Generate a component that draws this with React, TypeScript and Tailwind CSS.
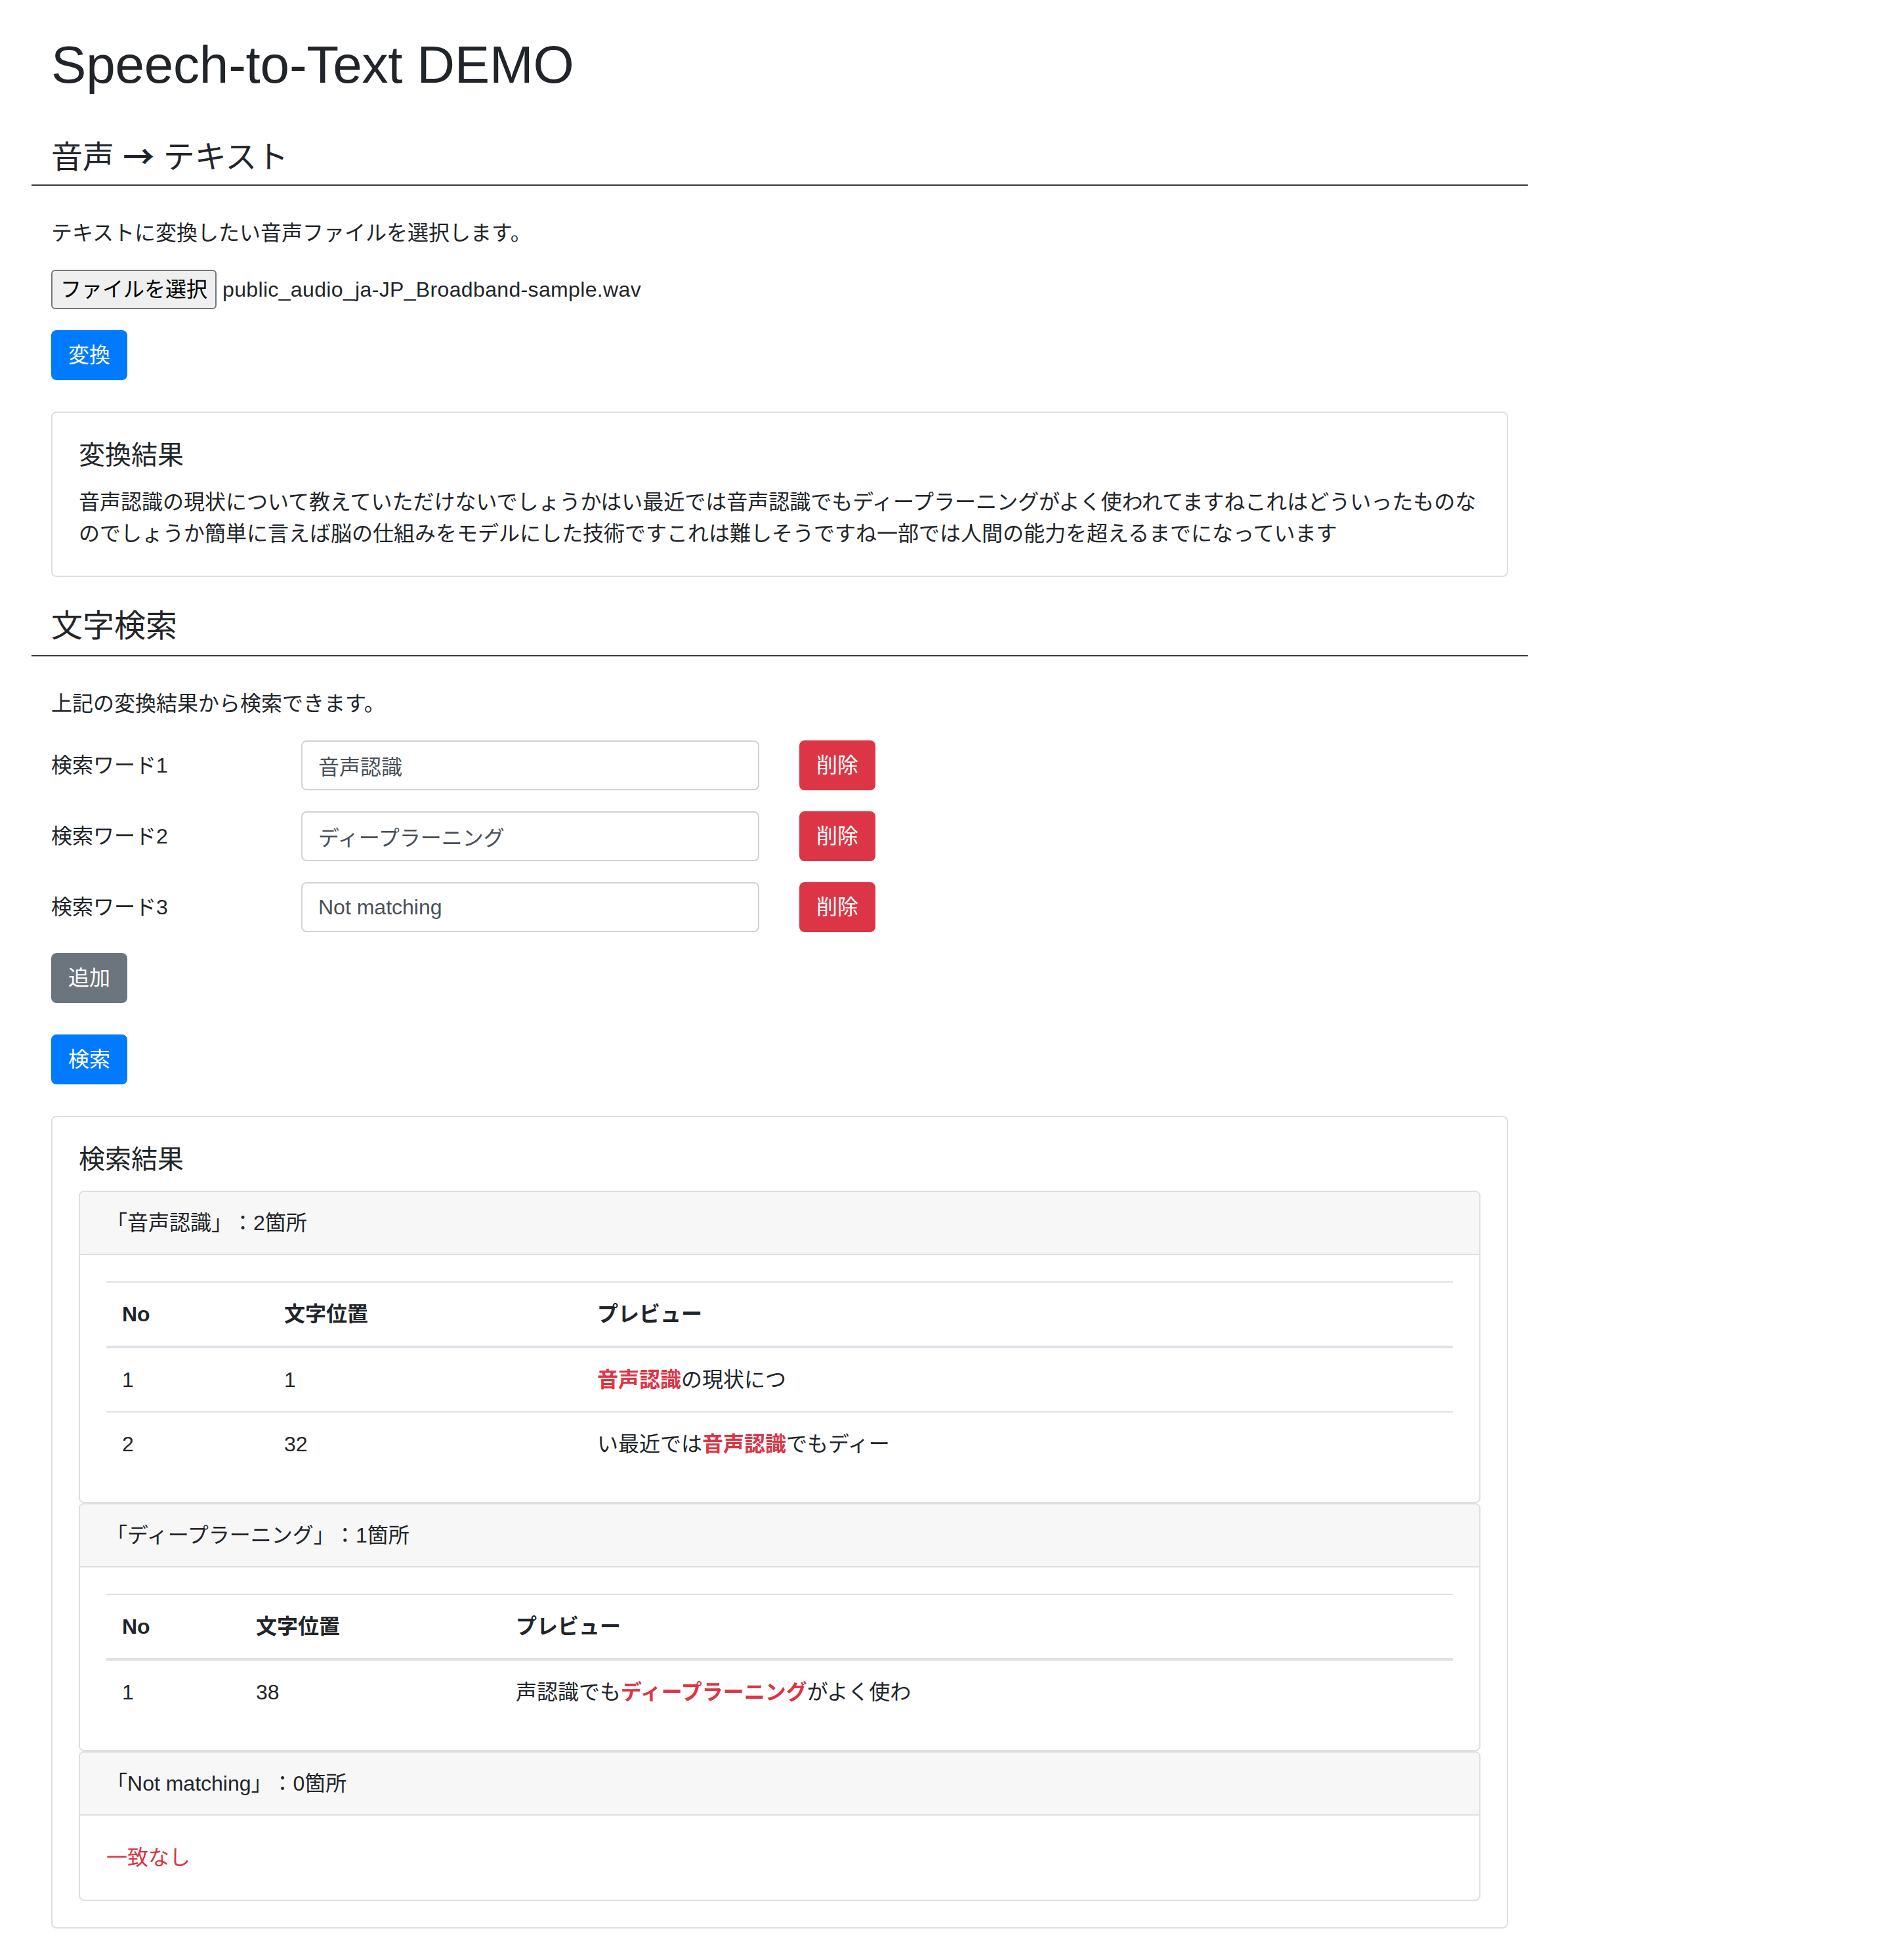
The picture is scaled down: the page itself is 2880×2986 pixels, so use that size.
import React from 'react';

const font = "font-['Liberation_Sans','Noto_Sans_CJK_JP',sans-serif]";

const TRANSCRIPT =
  '音声認識の現状について教えていただけないでしょうかはい最近では音声認識でもディープラーニングがよく使われてますねこれはどういったものなのでしょうか簡単に言えば脳の仕組みをモデルにした技術ですこれは難しそうですね一部では人間の能力を超えるまでになっています';

interface Hit {
  no: number;
  pos: number;
  before: string;
  word: string;
  after: string;
}

interface Result {
  word: string;
  count: number;
  cols: [string, string];
  hits: Hit[];
}

const results: Result[] = [
  {
    word: '音声認識',
    count: 2,
    cols: ['w-[247px]', 'w-[477px]'],
    hits: [
      { no: 1, pos: 1, before: '', word: '音声認識', after: 'の現状につ' },
      { no: 2, pos: 32, before: 'い最近では', word: '音声認識', after: 'でもディー' },
    ],
  },
  {
    word: 'ディープラーニング',
    count: 1,
    cols: ['w-[204px]', 'w-[396px]'],
    hits: [{ no: 1, pos: 38, before: '声認識でも', word: 'ディープラーニング', after: 'がよく使わ' }],
  },
  { word: 'Not matching', count: 0, cols: ['', ''], hits: [] },
];

const words = ['音声認識', 'ディープラーニング', 'Not matching'];

const SectionTitle: React.FC<{ title: React.ReactNode; className?: string }> = ({ title, className = '' }) => (
  <div className={`-mx-[30px] px-[30px] pb-[16px] border-b-2 border-[#343a40] ${className}`}>
    <h4 className="h-[57.6px] text-[48px] leading-[57.6px] font-normal">{title}</h4>
  </div>
);

const Btn: React.FC<{ label: string; color: string; className?: string }> = ({ label, color, className = '' }) => (
  <button className={`h-[76px] px-[24px] rounded-[8px] border-2 text-white text-[32px] leading-[48px] ${color} ${className}`}>
    {label}
  </button>
);

const ResultCard: React.FC<{ r: Result }> = ({ r }) => (
  <div className="border-2 border-[#dfdfdf] rounded-[8px] overflow-hidden">
    <div className="h-[96px] bg-[#f7f7f7] px-[40px] pt-[23px] border-b-2 border-[#dfdfdf]">
      <div className="h-[48px]">「{r.word}」：{r.count}箇所</div>
    </div>
    <div className="p-[40px]">
      {r.hits.length === 0 ? (
        <p className="h-[48px] text-[#dc3545]">一致なし</p>
      ) : (
        <table className="w-full table-fixed border-separate border-spacing-0">
          <thead>
            <tr>
              <th className={`${r.cols[0]} text-left font-bold p-[24px] border-t-2 border-b-4 border-[#dee2e6]`}>
                <div className="h-[48px]">No</div>
              </th>
              <th className={`${r.cols[1]} text-left font-bold p-[24px] border-t-2 border-b-4 border-[#dee2e6]`}>
                <div className="h-[48px]">文字位置</div>
              </th>
              <th className="text-left font-bold p-[24px] border-t-2 border-b-4 border-[#dee2e6]">
                <div className="h-[48px]">プレビュー</div>
              </th>
            </tr>
          </thead>
          <tbody>
            {r.hits.map((h, i) => (
              <tr key={h.no}>
                <td className={`p-[24px] border-[#dee2e6] ${i > 0 ? 'border-t-2' : ''}`}>
                  <div className="h-[48px]">{h.no}</div>
                </td>
                <td className={`p-[24px] border-[#dee2e6] ${i > 0 ? 'border-t-2' : ''}`}>
                  <div className="h-[48px]">{h.pos}</div>
                </td>
                <td className={`p-[24px] border-[#dee2e6] ${i > 0 ? 'border-t-2' : ''}`}>
                  <div className="h-[48px]">
                    {h.before}
                    <span className="text-[#dc3545] font-bold">{h.word}</span>
                    {h.after}
                  </div>
                </td>
              </tr>
            ))}
          </tbody>
        </table>
      )}
    </div>
  </div>
);

export default function App() {
  return (
    <div className={`min-h-screen bg-white text-[#212529] text-[32px] leading-[48px] [text-spacing-trim:space-all] ${font}`}>
      <div className="ml-[48px] w-[2280px] px-[30px] pt-[51px] pb-[48px]">
        <h1 className="h-[96px] text-[80px] leading-[96px] font-normal tracking-[-0.2px]">Speech-to-Text DEMO</h1>

        <SectionTitle
          title={
            <>
              音声 <span className="font-['Noto_Sans_CJK_JP',sans-serif] font-bold">→</span> テキスト
            </>
          }
          className="mt-[60px]"
        />

        <p className="mt-[48px] h-[48px]">テキストに変換したい音声ファイルを選択します。</p>

        <div className="mt-[32px] flex items-center h-[60px]">
          <button className="h-[60px] px-[12px] border-2 border-[#767676] bg-[#efefef] rounded-[6px] text-[32px] leading-[48px] text-black">
            ファイルを選択
          </button>
          <span className="ml-[9px] tracking-[0.35px]">public_audio_ja-JP_Broadband-sample.wav</span>
        </div>

        <Btn label="変換" color="bg-[#007bff] border-[#007bff]" className="mt-[32px]" />

        <div className="mt-[48px] border-2 border-[#dfdfdf] rounded-[8px] p-[40px]">
          <h5 className="h-[48px] text-[40px] leading-[48px] font-normal mb-[24px]">変換結果</h5>
          <p className="-mr-[12px] h-[96px]">{TRANSCRIPT}</p>
        </div>

        <SectionTitle title="文字検索" className="mt-[46px]" />

        <p className="mt-[48px] h-[48px]">上記の変換結果から検索できます。</p>

        <div className="mt-[32px] flex flex-col gap-[32px]">
          {words.map((w, i) => (
            <div key={i} className="flex items-center h-[76px]">
              <label className="w-[381px]">検索ワード{i + 1}</label>
              <input
                type="text"
                defaultValue={w}
                className="w-[698px] h-[76px] px-[24px] border-2 border-[#ced4da] rounded-[8px] text-[#495057] text-[32px] outline-none"
              />
              <Btn label="削除" color="bg-[#dc3545] border-[#dc3545]" className="ml-[61px]" />
            </div>
          ))}
        </div>

        <Btn label="追加" color="bg-[#6c757d] border-[#6c757d]" className="mt-[32px]" />
        <div>
          <Btn label="検索" color="bg-[#007bff] border-[#007bff]" className="mt-[48px]" />
        </div>

        <div className="mt-[48px] border-2 border-[#dfdfdf] rounded-[8px] p-[40px]">
          <h5 className="h-[48px] text-[40px] leading-[48px] font-normal mb-[24px]">検索結果</h5>
          {results.map((r) => (
            <ResultCard key={r.word} r={r} />
          ))}
        </div>
      </div>
    </div>
  );
}
